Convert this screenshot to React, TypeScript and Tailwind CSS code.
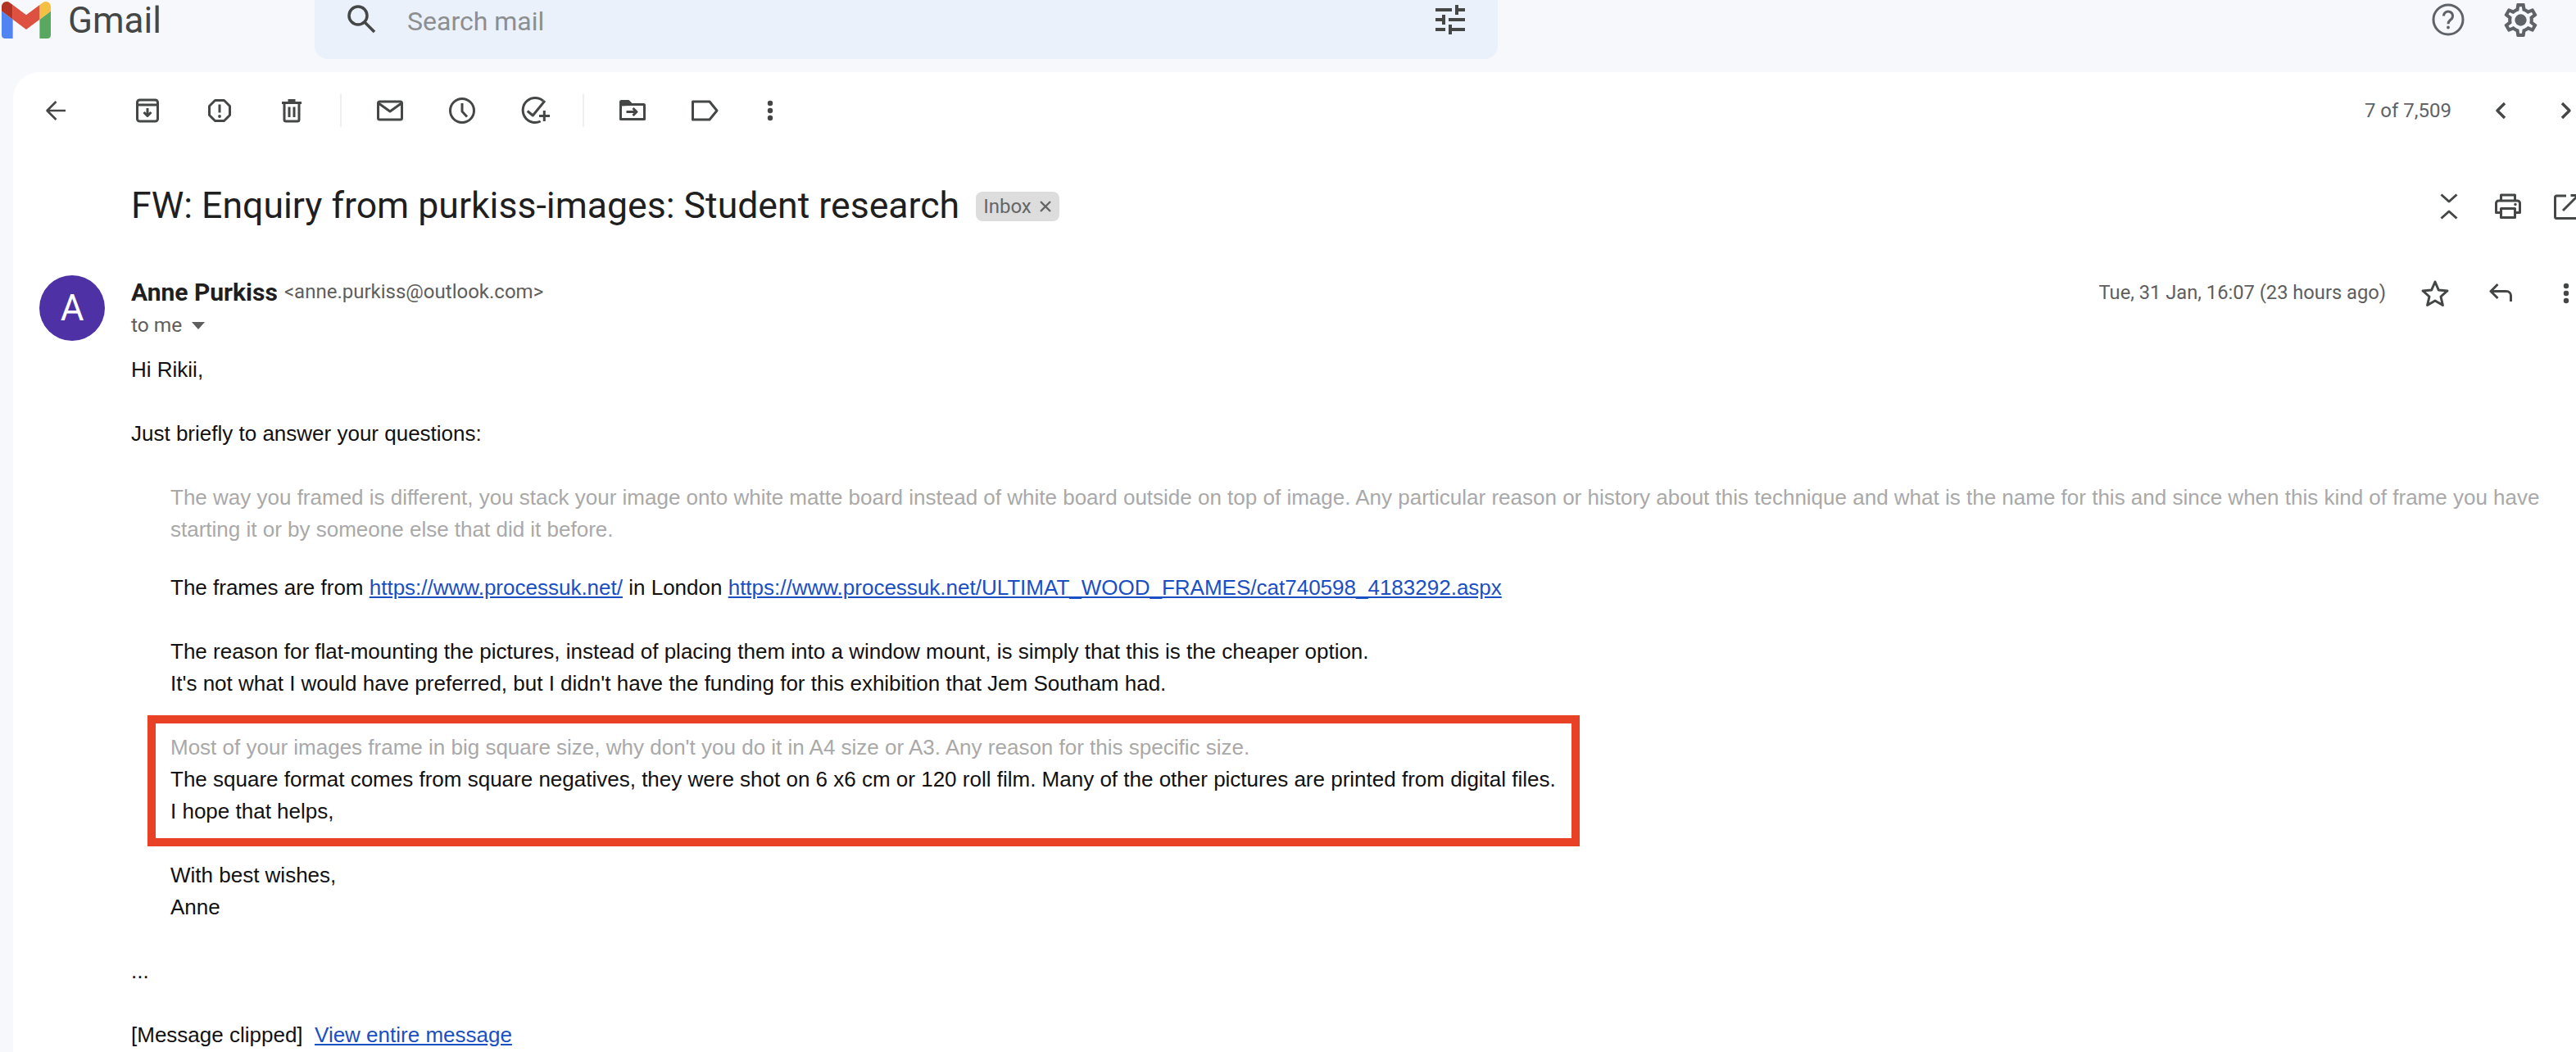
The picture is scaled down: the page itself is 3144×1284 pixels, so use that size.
// Gmail message view

const INK = '#444746';

function Icon({ children, className = 'w-10 h-10' }: { children: React.ReactNode; className?: string }) {
  return (
    <svg
      viewBox="0 0 40 40"
      className={`${className} shrink-0`}
      fill="none"
      stroke={INK}
      strokeWidth={3}
      strokeLinejoin="round"
    >
      {children}
    </svg>
  );
}

function Dots() {
  return (
    <Icon>
      <circle cx="20" cy="11" r="3.2" fill={INK} stroke="none" />
      <circle cx="20" cy="20" r="3.2" fill={INK} stroke="none" />
      <circle cx="20" cy="29" r="3.2" fill={INK} stroke="none" />
    </Icon>
  );
}

function ToolButton({ children }: { children: React.ReactNode }) {
  return <div className="w-[88px] h-10 flex items-center justify-center shrink-0">{children}</div>;
}

function Divider() {
  return <div className="w-0.5 h-10 mx-[15px] bg-[#eeeeee] shrink-0" />;
}

function GmailLogo() {
  return (
    <svg viewBox="52 42 88 66" className="w-[60px] h-[45px] shrink-0">
      <path fill="#5084f2" d="M58 108h14V74L52 59v43c0 3.32 2.69 6 6 6" />
      <path fill="#58a85f" d="M120 108h14c3.32 0 6-2.69 6-6V59l-20 15" />
      <path fill="#f4c042" d="M120 48v26l20-15v-8c0-7.42-8.47-11.65-14.4-7.2" />
      <path fill="#de5140" d="M72 74V48l24 18 24-18v26L96 92" />
      <path fill="#b23224" d="M52 51v8l20 15V48l-5.6-4.2c-5.94-4.45-14.4-.22-14.4 7.2" />
    </svg>
  );
}

function Header() {
  return (
    <div className="h-[88px] flex items-start">
      <div className="w-[384px] shrink-0 flex items-start pl-[2px] pt-[2px]">
        <GmailLogo />
        <span className="ml-[21px] text-[#444746] text-[44px] leading-[46px] font-['Roboto',sans-serif]">Gmail</span>
      </div>

      <div className="w-[1444px] h-[72px] shrink-0 bg-[#eaf1fb] rounded-b-2xl flex items-start pl-10 pr-10 pt-[6px]">
        <svg viewBox="0 0 36 36" className="w-9 h-9 shrink-0" fill="none" stroke={INK} strokeWidth={3.5}>
          <circle cx="13" cy="13" r="11" />
          <path d="M21.5 21.5 33 33" />
        </svg>
        <span className="ml-[37px] mt-[2px] text-[32px] leading-[36px] text-[#8c8e90] font-['Roboto',sans-serif]">Search mail</span>
        <svg viewBox="0 0 36 36" className="ml-auto w-9 h-9 shrink-0" fill={INK}>
          <rect x="0" y="4" width="20" height="4" />
          <rect x="24" y="0" width="4" height="12" />
          <rect x="28" y="4" width="8" height="4" />
          <rect x="0" y="16" width="8" height="4" />
          <rect x="8" y="12" width="4" height="12" />
          <rect x="16" y="16" width="20" height="4" />
          <rect x="0" y="28" width="12" height="4" />
          <rect x="16" y="24" width="4" height="12" />
          <rect x="20" y="28" width="16" height="4" />
        </svg>
      </div>

      <div className="flex-1 flex justify-end pr-6">
        <div className="w-[88px] h-12 flex items-center justify-center">
          <svg viewBox="0 0 48 48" className="w-12 h-12" fill="none" stroke="#5f6368" strokeWidth={3}>
            <circle cx="24" cy="24" r="18" />
            <path d="M18.5 19.5a5.5 5.5 0 1 1 8.6 4.5c-2 1.5-3.1 2.6-3.1 5.2" />
            <circle cx="24" cy="33.5" r="1.9" fill="#5f6368" stroke="none" />
          </svg>
        </div>
        <div className="w-[88px] h-12 flex items-center justify-center">
          <svg viewBox="0 0 24 24" className="w-[49px] h-[49px]" fill="#5f6368">
            <path d="M19.43 12.98c.04-.32.07-.64.07-.98 0-.34-.03-.66-.07-.98l2.11-1.65c.19-.15.24-.42.12-.64l-2-3.46c-.09-.16-.26-.25-.44-.25-.06 0-.12.01-.17.03l-2.49 1c-.52-.4-1.08-.73-1.69-.98l-.38-2.65C14.46 2.18 14.25 2 14 2h-4c-.25 0-.46.18-.49.42l-.38 2.65c-.61.25-1.17.59-1.69.98l-2.49-1c-.06-.02-.12-.03-.18-.03-.17 0-.34.09-.43.25l-2 3.46c-.13.22-.07.49.12.64l2.11 1.65c-.04.32-.07.65-.07.98 0 .33.03.66.07.98l-2.11 1.65c-.19.15-.24.42-.12.64l2 3.46c.09.16.26.25.44.25.06 0 .12-.01.17-.03l2.49-1c.52.4 1.08.73 1.69.98l.38 2.65c.03.24.24.42.49.42h4c.25 0 .46-.18.49-.42l.38-2.65c.61-.25 1.17-.59 1.69-.98l2.49 1c.06.02.12.03.18.03.17 0 .34-.09.43-.25l2-3.46c.12-.22.07-.49-.12-.64l-2.11-1.65zm-1.98-1.71c.04.31.05.52.05.73 0 .21-.02.43-.05.73l-.14 1.13.89.7 1.08.84-.7 1.21-1.27-.51-1.04-.42-.9.68c-.43.32-.84.56-1.25.73l-1.06.43-.16 1.13-.2 1.35h-1.4l-.19-1.35-.16-1.13-1.06-.43c-.43-.18-.83-.41-1.23-.71l-.91-.7-1.06.43-1.27.51-.7-1.21 1.08-.84.89-.7-.14-1.13c-.03-.31-.05-.54-.05-.74s.02-.43.05-.73l.14-1.13-.89-.7-1.08-.84.7-1.21 1.27.51 1.04.42.9-.68c.43-.32.84-.56 1.25-.73l1.06-.43.16-1.13.2-1.35h1.39l.19 1.35.16 1.13 1.06.43c.43.18.83.41 1.23.71l.91.7 1.06-.43 1.27-.51.7 1.21-1.07.85-.89.7.14 1.13z" />
            <circle cx="12" cy="12" r="3.5" />
          </svg>
        </div>
      </div>
    </div>
  );
}

function Toolbar() {
  return (
    <div className="h-[94px] flex items-center pl-2">
      <ToolButton>
        <Icon>
          <path strokeWidth={2.6} d="M32 20H10M20.5 9 9.5 20l11 11" />
        </Icon>
      </ToolButton>
      <div className="w-6 shrink-0" />
      <ToolButton>
        <Icon>
          <rect x="7.5" y="7" width="25" height="26" rx="3" />
          <path d="M8 13h24" />
          <path d="M20 17v9M15.5 22l4.5 4.5 4.5-4.5" />
        </Icon>
      </ToolButton>
      <ToolButton>
        <Icon>
          <path d="M14.5 7.5h11l7 7v11l-7 7h-11l-7-7v-11z" />
          <path d="M20 12.5v10" />
          <circle cx="20" cy="27" r="1.9" fill={INK} stroke="none" />
        </Icon>
      </ToolButton>
      <ToolButton>
        <Icon>
          <path d="M8 10.5h24M15.5 7.5h9" />
          <path d="M11 10.5V31a2 2 0 0 0 2 2h14a2 2 0 0 0 2-2V10.5" />
          <path d="M17 15.5v12.5M23 15.5v12.5" />
        </Icon>
      </ToolButton>
      <Divider />
      <ToolButton>
        <Icon>
          <rect x="5.5" y="9" width="29" height="22" rx="2" />
          <path d="M6 11l14 10 14-10" />
        </Icon>
      </ToolButton>
      <ToolButton>
        <Icon>
          <circle cx="20" cy="20" r="14.5" />
          <path d="M20 11v10l6 6.5" />
        </Icon>
      </ToolButton>
      <ToolButton>
        <Icon>
          <path d="M31 8.2A15 15 0 1 0 27.7 33" />
          <path d="M11.700 20.5 18.300 26 33 8" />
          <path d="M32.300 20v13M26 26.500h13" />
        </Icon>
      </ToolButton>
      <Divider />
      <ToolButton>
        <Icon>
          <path fill={INK} d="M5.500 13V9.500a1 1 0 0 1 1-1h8.500l4 4z" />
          <path d="M5.500 12.500h28a1 1 0 0 1 1 1v17h-29z" />
          <path d="M12.500 21.500h12M20.500 17l4.500 4.500-4.500 4.500" />
        </Icon>
      </ToolButton>
      <ToolButton>
        <Icon>
          <path d="M5.500 9H26l9 11-9 11H5.500z" />
        </Icon>
      </ToolButton>
      <div className="w-[80px] h-10 flex items-center justify-center shrink-0 -ml-1">
        <Dots />
      </div>

      <div className="ml-auto flex items-center">
        <span className="mr-5 text-2xl text-[#5f6368] font-['Roboto',sans-serif]">7 of 7,509</span>
        <div className="w-20 flex justify-center">
          <Icon>
            <path strokeWidth={3.4} d="M25 11l-9 9 9 9" />
          </Icon>
        </div>
        <div className="w-20 flex justify-center">
          <Icon>
            <path strokeWidth={3.4} d="M15 11l9 9-9 9" />
          </Icon>
        </div>
      </div>
    </div>
  );
}

function SubjectRow() {
  return (
    <div className="h-[140px] flex items-center pl-[144px]">
      <h1 className="text-[44.6px] leading-[56px] -mt-0.5 font-normal text-[#1f1f1f] font-['Roboto',sans-serif] whitespace-nowrap">
        FW: Enquiry from purkiss-images: Student research
      </h1>
      <div className="ml-5 h-9 w-[102px] rounded-lg bg-[#dddddd] flex items-center pl-[9px] text-[24px] text-[#666666] font-['Roboto',sans-serif]">
        Inbox
        <svg viewBox="0 0 14 14" className="ml-[10px] w-[14px] h-[14px]" stroke="#666666" strokeWidth={2.4}>
          <path d="M1 1l12 12M13 1 1 13" />
        </svg>
      </div>

      <div className="ml-auto flex items-center pr-[3px]">
        <div className="w-[72px] flex justify-center">
          <Icon>
            <path d="M10.500 5.500 20 14l9.500-8.500M10.500 34.500 20 26l9.500 8.500" />
          </Icon>
        </div>
        <div className="w-[72px] flex justify-center">
          <Icon>
            <path d="M11.500 12.500v-6.500h17v6.500" />
            <path d="M11 27.500H5.500V16a3 3 0 0 1 3-3h23a3 3 0 0 1 3 3v11.500H29" />
            <rect x="11.500" y="22.500" width="17" height="11" />
            <circle cx="29" cy="17.500" r="1.700" fill={INK} stroke="none" />
          </Icon>
        </div>
        <div className="w-[72px] flex justify-center">
          <Icon>
            <path d="M19 7H7.500a2 2 0 0 0-2 2v23.500a2 2 0 0 0 2 2H32a2 2 0 0 0 2-2V21" />
            <path d="M15 25 33 7M24.500 6.500h9v9" />
          </Icon>
        </div>
      </div>
    </div>
  );
}

function MessageHead() {
  return (
    <div className="pt-[2px]">
      <div className="h-10 flex items-center">
        <span className="text-[30px] font-bold text-[#1f1f1f] font-['Roboto',sans-serif]">Anne Purkiss</span>
        <span className="ml-2 text-[24px] text-[#5e5e5e] font-['Roboto',sans-serif]">&lt;anne.purkiss@outlook.com&gt;</span>
        <div className="ml-auto flex items-center mt-[3px]">
          <span className="mr-5 text-[23.7px] text-[#5e5e5e] font-['Roboto',sans-serif]">Tue, 31 Jan, 16:07 (23 hours ago)</span>
          <div className="w-20 flex justify-center">
            <Icon>
              <path d="M20 6l4.300 10 10.700.900-8 7.100 2.400 10.500L20 29l-9.400 5.500L13 24l-8-7.100 10.700-.900z" />
            </Icon>
          </div>
          <div className="w-20 flex justify-center">
            <Icon>
              <path d="M16.500 9 8 17.500l8.500 8.500M8 17.500h19a5.500 5.500 0 0 1 5.500 5.500v7" />
            </Icon>
          </div>
          <div className="w-20 flex justify-center">
            <Dots />
          </div>
        </div>
      </div>
      <div className="h-10 flex items-center mt-px">
        <span className="text-[24.5px] text-[#5e5e5e] font-['Roboto',sans-serif]">to me</span>
        <svg viewBox="0 0 16 9" className="ml-3 w-4 h-[9px]" fill="#5e5e5e">
          <path d="M0 0h16l-8 9z" />
        </svg>
      </div>
    </div>
  );
}

function MessageBody() {
  return (
    <div className="mt-[15px] text-[26px] leading-[39px] text-[#111111] font-['Liberation_Sans',Arial,sans-serif]">
      <p>Hi Rikii,</p>
      <p className="mt-[39px]">Just briefly to answer your questions:</p>

      <div className="pl-12 mt-[39px]">
        <p className="text-[#a9a9a9] whitespace-nowrap">
          The way you framed is different, you stack your image onto white matte board instead of white board outside on top of image. Any particular reason or history about this technique and what is the name for this and since when this kind of frame you have
          <br />
          starting it or by someone else that did it before.
        </p>
        <p className="mt-8">
          The frames are from <a className="text-[#1a4fc4] underline">https://www.processuk.net/</a> in London{' '}
          <a className="text-[#1a4fc4] underline">https://www.processuk.net/ULTIMAT_WOOD_FRAMES/cat740598_4183292.aspx</a>
        </p>
        <p className="mt-[39px]">
          The reason for flat-mounting the pictures, instead of placing them into a window mount, is simply that this is the cheaper option.
          <br />
          It's not what I would have preferred, but I didn't have the funding for this exhibition that Jem Southam had.
        </p>

        <div className="relative mt-[39px]">
          <p className="text-[#a9a9a9]">Most of your images frame in big square size, why don't you do it in A4 size or A3. Any reason for this specific size.</p>
          <p>The square format comes from square negatives, they were shot on 6 x6 cm or 120 roll film. Many of the other pictures are printed from digital files.</p>
          <p>I hope that helps,</p>
          {/* annotation box drawn over the text */}
          <div className="absolute -left-7 -top-5 w-[1748px] h-[160px] border-[10px] border-[#e94126]" />
        </div>

        <p className="mt-[39px]">
          With best wishes,
          <br />
          Anne
        </p>
      </div>

      <p className="mt-[39px]">...</p>
      <p className="mt-[39px]">
        [Message clipped]&nbsp; <a className="text-[#1a4fc4] underline">View entire message</a>
      </p>
    </div>
  );
}

export default function App() {
  return (
    <div className="w-[3144px] h-[1284px] overflow-hidden bg-[#f6f8fc]">
      <Header />
      <div className="ml-4 w-[3156px] h-[1196px] bg-white rounded-tl-[32px]">
        <Toolbar />
        <SubjectRow />
        <div className="flex items-start pl-8 pt-3">
          <div className="mt-[2px] w-20 h-20 rounded-full bg-[#4e31a5] flex items-center justify-center text-white text-[44px] shrink-0 font-['Roboto',sans-serif]">
            A
          </div>
          <div className="ml-8 flex-1 min-w-0">
            <MessageHead />
            <MessageBody />
          </div>
        </div>
      </div>
    </div>
  );
}
